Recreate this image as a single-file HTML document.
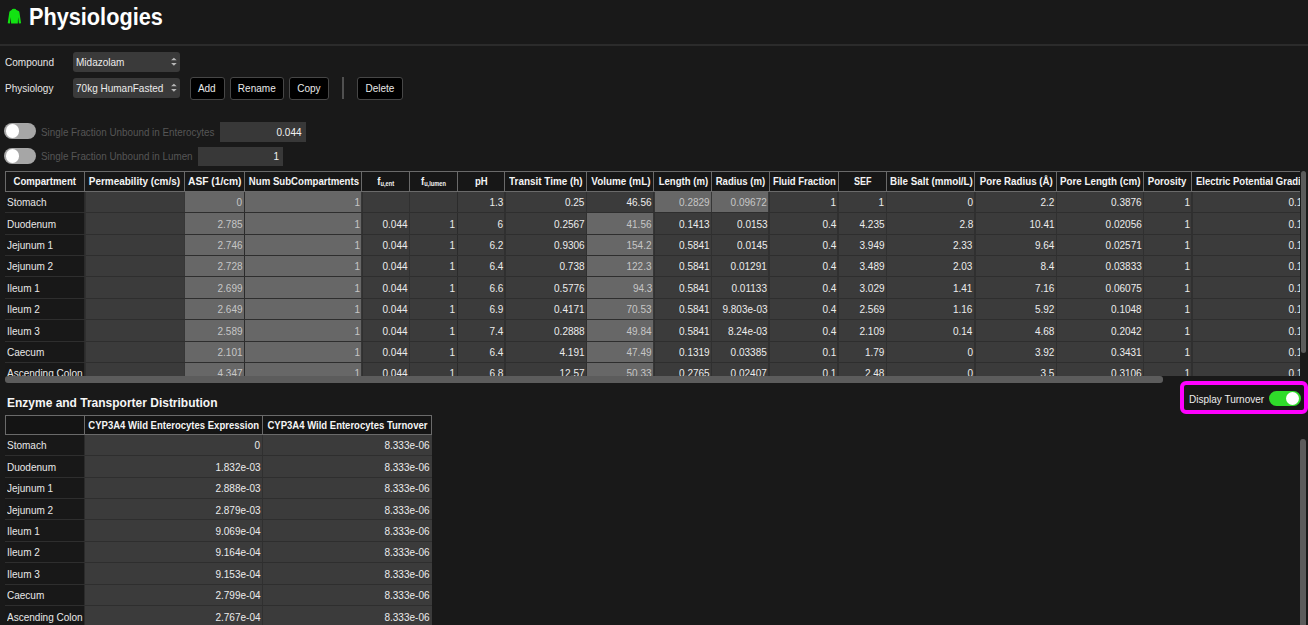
<!DOCTYPE html>
<html><head><meta charset="utf-8"><style>
html,body{margin:0;padding:0;width:1308px;height:625px;overflow:hidden;background:#191919;}
body{position:relative;font-family:"Liberation Sans",sans-serif;}
.r{position:absolute;}
.t{position:absolute;white-space:nowrap;overflow:visible;display:flex;align-items:center;}
.t span{display:block;flex:none;white-space:nowrap;}
.clip{position:absolute;overflow:hidden;}
sub{font-size:6.6px;vertical-align:-1.3px;line-height:0;}
</style></head><body>
<svg style="position:absolute;left:0;top:0" width="40" height="40" viewBox="0 0 40 40"><path fill="#12e212" d="M12.4 9.0 Q14 8.6 15.6 9.0 L16.4 10.0 L18.6 10.9 Q19.3 11.3 19.4 12.2 L21.1 23.2 L18.9 23.4 L18.1 17.3 L17.8 23.5 L11.1 23.5 L10.8 17.3 L9.9 23.4 L7.7 23.2 L9.3 12.2 Q9.4 11.3 10.1 10.9 L11.6 10.0 Z"/></svg>
<div class="t" style="left:29px;top:2.5px;width:200px;height:28px;line-height:28px;justify-content:flex-start;font-size:23px;font-weight:bold;color:#ffffff;"><span style="transform:scaleX(0.943);transform-origin:left center">Physiologies</span></div>
<div class="r" style="left:0px;top:44px;width:1308px;height:2px;background:#2b2b2b;"></div>
<div class="t" style="left:5px;top:52px;width:80px;height:20px;line-height:20px;justify-content:flex-start;font-size:11px;font-weight:normal;color:#e6e6e6;"><span style="transform:scaleX(0.91);transform-origin:left center">Compound</span></div>
<div class="t" style="left:5px;top:78px;width:80px;height:20px;line-height:20px;justify-content:flex-start;font-size:11px;font-weight:normal;color:#e6e6e6;"><span style="transform:scaleX(0.91);transform-origin:left center">Physiology</span></div>
<div class="r" style="left:73px;top:52px;width:107px;height:20px;background:#3a3a3a;border-radius:3px"></div>
<div class="t" style="left:76px;top:52px;width:95px;height:20px;line-height:20px;justify-content:flex-start;font-size:11px;font-weight:normal;color:#ececec;"><span style="transform:scaleX(0.91);transform-origin:left center">Midazolam</span></div>
<svg style="position:absolute;left:170px;top:57px" width="8" height="10" viewBox="0 0 8 10"><path fill="#b8b8b8" d="M1.1 3.2 L3.9 0.7 L6.7 3.2 Z M1.1 6.0 L3.9 8.7 L6.7 6.0 Z"/></svg>
<div class="r" style="left:73px;top:78px;width:107px;height:20px;background:#3a3a3a;border-radius:3px"></div>
<div class="t" style="left:76px;top:78px;width:95px;height:20px;line-height:20px;justify-content:flex-start;font-size:11px;font-weight:normal;color:#ececec;"><span style="transform:scaleX(0.91);transform-origin:left center">70kg HumanFasted</span></div>
<svg style="position:absolute;left:170px;top:83px" width="8" height="10" viewBox="0 0 8 10"><path fill="#b8b8b8" d="M1.1 3.2 L3.9 0.7 L6.7 3.2 Z M1.1 6.0 L3.9 8.7 L6.7 6.0 Z"/></svg>
<div class="r" style="left:190px;top:76.5px;width:34.5px;height:23px;box-sizing:border-box;background:#000;border:1px solid #474747;border-radius:3px"></div>
<div class="t" style="left:190px;top:76.5px;width:34.5px;height:23px;line-height:23px;justify-content:center;font-size:11px;font-weight:normal;color:#e8e8e8;"><span style="transform:scaleX(0.91);transform-origin:center center">Add</span></div>
<div class="r" style="left:229.5px;top:76.5px;width:54.5px;height:23px;box-sizing:border-box;background:#000;border:1px solid #474747;border-radius:3px"></div>
<div class="t" style="left:229.5px;top:76.5px;width:54.5px;height:23px;line-height:23px;justify-content:center;font-size:11px;font-weight:normal;color:#e8e8e8;"><span style="transform:scaleX(0.91);transform-origin:center center">Rename</span></div>
<div class="r" style="left:289px;top:76.5px;width:39.5px;height:23px;box-sizing:border-box;background:#000;border:1px solid #474747;border-radius:3px"></div>
<div class="t" style="left:289px;top:76.5px;width:39.5px;height:23px;line-height:23px;justify-content:center;font-size:11px;font-weight:normal;color:#e8e8e8;"><span style="transform:scaleX(0.91);transform-origin:center center">Copy</span></div>
<div class="r" style="left:356.5px;top:76.5px;width:46.0px;height:23px;box-sizing:border-box;background:#000;border:1px solid #474747;border-radius:3px"></div>
<div class="t" style="left:356.5px;top:76.5px;width:46.0px;height:23px;line-height:23px;justify-content:center;font-size:11px;font-weight:normal;color:#e8e8e8;"><span style="transform:scaleX(0.91);transform-origin:center center">Delete</span></div>
<div class="r" style="left:342px;top:77px;width:2px;height:22px;background:#505050;"></div>
<div class="r" style="left:4.3px;top:123px;width:31.7px;height:16.3px;background:#a6a6a6;border-radius:9px"></div>
<div class="r" style="left:5.6px;top:124.3px;width:13.7px;height:13.7px;background:#ffffff;border-radius:50%"></div>
<div class="t" style="left:41.3px;top:122.5px;width:190px;height:19.5px;line-height:19.5px;justify-content:flex-start;font-size:11px;font-weight:normal;color:#565656;"><span style="transform:scaleX(0.895);transform-origin:left center">Single Fraction Unbound in Enterocytes</span></div>
<div class="r" style="left:220px;top:122px;width:85.5px;height:19.5px;background:#383838;"></div>
<div class="t" style="left:220px;top:122.5px;width:81.5px;height:19.5px;line-height:19.5px;justify-content:flex-end;font-size:11px;font-weight:normal;color:#f2f2f2;"><span style="transform:scaleX(0.91);transform-origin:right center">0.044</span></div>
<div class="r" style="left:4.3px;top:148px;width:31.7px;height:16.3px;background:#a6a6a6;border-radius:9px"></div>
<div class="r" style="left:5.6px;top:149.3px;width:13.7px;height:13.7px;background:#ffffff;border-radius:50%"></div>
<div class="t" style="left:41.3px;top:147.0px;width:190px;height:19.5px;line-height:19.5px;justify-content:flex-start;font-size:11px;font-weight:normal;color:#565656;"><span style="transform:scaleX(0.895);transform-origin:left center">Single Fraction Unbound in Lumen</span></div>
<div class="r" style="left:198px;top:146.5px;width:85px;height:19.5px;background:#383838;"></div>
<div class="t" style="left:198px;top:147.0px;width:81px;height:19.5px;line-height:19.5px;justify-content:flex-end;font-size:11px;font-weight:normal;color:#f2f2f2;"><span style="transform:scaleX(0.91);transform-origin:right center">1</span></div>
<div class="clip" style="left:0;top:0;width:1300px;height:376px">
<div class="r" style="left:4.5px;top:171px;width:1420px;height:21px;background:#171717;"></div>
<div class="r" style="left:4.5px;top:171px;width:1420px;height:1px;background:#6a6a6a;"></div>
<div class="r" style="left:4.5px;top:191px;width:1420px;height:1px;background:#6a6a6a;"></div>
<div class="r" style="left:4.5px;top:171px;width:1px;height:21px;background:#6a6a6a;"></div>
<div class="r" style="left:84px;top:171px;width:1px;height:21px;background:#6a6a6a;"></div>
<div class="r" style="left:184px;top:171px;width:1px;height:21px;background:#6a6a6a;"></div>
<div class="r" style="left:244px;top:171px;width:1px;height:21px;background:#6a6a6a;"></div>
<div class="r" style="left:361px;top:171px;width:1px;height:21px;background:#6a6a6a;"></div>
<div class="r" style="left:409px;top:171px;width:1px;height:21px;background:#6a6a6a;"></div>
<div class="r" style="left:457px;top:171px;width:1px;height:21px;background:#6a6a6a;"></div>
<div class="r" style="left:504px;top:171px;width:1px;height:21px;background:#6a6a6a;"></div>
<div class="r" style="left:586px;top:171px;width:1px;height:21px;background:#6a6a6a;"></div>
<div class="r" style="left:653px;top:171px;width:1px;height:21px;background:#6a6a6a;"></div>
<div class="r" style="left:711px;top:171px;width:1px;height:21px;background:#6a6a6a;"></div>
<div class="r" style="left:769px;top:171px;width:1px;height:21px;background:#6a6a6a;"></div>
<div class="r" style="left:838px;top:171px;width:1px;height:21px;background:#6a6a6a;"></div>
<div class="r" style="left:886px;top:171px;width:1px;height:21px;background:#6a6a6a;"></div>
<div class="r" style="left:974px;top:171px;width:1px;height:21px;background:#6a6a6a;"></div>
<div class="r" style="left:1056px;top:171px;width:1px;height:21px;background:#6a6a6a;"></div>
<div class="r" style="left:1143px;top:171px;width:1px;height:21px;background:#6a6a6a;"></div>
<div class="r" style="left:1191px;top:171px;width:1px;height:21px;background:#6a6a6a;"></div>
<div class="t" style="left:5px;top:171px;width:80px;height:21px;line-height:21px;justify-content:center;font-size:11px;font-weight:bold;color:#f4f4f4;"><span style="transform:scaleX(0.8745149999999999);transform-origin:center center">Compartment</span></div>
<div class="t" style="left:85px;top:171px;width:99.30000000000001px;height:21px;line-height:21px;justify-content:center;font-size:11px;font-weight:bold;color:#f4f4f4;"><span style="transform:scaleX(0.90479);transform-origin:center center">Permeability (cm/s)</span></div>
<div class="t" style="left:185.0px;top:171px;width:60.19999999999999px;height:21px;line-height:21px;justify-content:center;font-size:11px;font-weight:bold;color:#f4f4f4;"><span style="transform:scaleX(0.93074);transform-origin:center center">ASF (1/cm)</span></div>
<div class="t" style="left:245.6px;top:171px;width:117.5px;height:21px;line-height:21px;justify-content:center;font-size:11px;font-weight:bold;color:#f4f4f4;"><span style="transform:scaleX(0.87538);transform-origin:center center">Num SubCompartments</span></div>
<div class="t" style="left:362px;top:171px;width:47.69999999999999px;height:21px;line-height:21px;justify-content:center;font-size:11px;font-weight:bold;color:#f4f4f4;"><span style="transform:scaleX(0.865);transform-origin:center center">f<sub>u,ent</sub></span></div>
<div class="t" style="left:409.7px;top:171px;width:47.80000000000001px;height:21px;line-height:21px;justify-content:center;font-size:11px;font-weight:bold;color:#f4f4f4;"><span style="transform:scaleX(0.865);transform-origin:center center">f<sub>u,lumen</sub></span></div>
<div class="t" style="left:457.5px;top:171px;width:47.30000000000001px;height:21px;line-height:21px;justify-content:center;font-size:11px;font-weight:bold;color:#f4f4f4;"><span style="transform:scaleX(0.865);transform-origin:center center">pH</span></div>
<div class="t" style="left:504.8px;top:171px;width:81.90000000000003px;height:21px;line-height:21px;justify-content:center;font-size:11px;font-weight:bold;color:#f4f4f4;"><span style="transform:scaleX(0.8996000000000001);transform-origin:center center">Transit Time (h)</span></div>
<div class="t" style="left:587.5px;top:171px;width:67.29999999999995px;height:21px;line-height:21px;justify-content:center;font-size:11px;font-weight:bold;color:#f4f4f4;"><span style="transform:scaleX(0.900465);transform-origin:center center">Volume (mL)</span></div>
<div class="t" style="left:654.5px;top:171px;width:57.700000000000045px;height:21px;line-height:21px;justify-content:center;font-size:11px;font-weight:bold;color:#f4f4f4;"><span style="transform:scaleX(0.87019);transform-origin:center center">Length (m)</span></div>
<div class="t" style="left:712.1px;top:171px;width:57.5px;height:21px;line-height:21px;justify-content:center;font-size:11px;font-weight:bold;color:#f4f4f4;"><span style="transform:scaleX(0.87019);transform-origin:center center">Radius (m)</span></div>
<div class="t" style="left:770.1px;top:171px;width:69.0px;height:21px;line-height:21px;justify-content:center;font-size:11px;font-weight:bold;color:#f4f4f4;"><span style="transform:scaleX(0.865);transform-origin:center center">Fluid Fraction</span></div>
<div class="t" style="left:838.2px;top:171px;width:48.09999999999991px;height:21px;line-height:21px;justify-content:center;font-size:11px;font-weight:bold;color:#f4f4f4;"><span style="transform:scaleX(0.82175);transform-origin:center center">SEF</span></div>
<div class="t" style="left:887.0999999999999px;top:171px;width:88.5px;height:21px;line-height:21px;justify-content:center;font-size:11px;font-weight:bold;color:#f4f4f4;"><span style="transform:scaleX(0.89095);transform-origin:center center">Bile Salt (mmol/L)</span></div>
<div class="t" style="left:975.5999999999999px;top:171px;width:81.5px;height:21px;line-height:21px;justify-content:center;font-size:11px;font-weight:bold;color:#f4f4f4;"><span style="transform:scaleX(0.8848949999999999);transform-origin:center center">Pore Radius (&#197;)</span></div>
<div class="t" style="left:1056.3px;top:171px;width:87.29999999999995px;height:21px;line-height:21px;justify-content:center;font-size:11px;font-weight:bold;color:#f4f4f4;"><span style="transform:scaleX(0.89095);transform-origin:center center">Pore Length (cm)</span></div>
<div class="t" style="left:1142.8px;top:171px;width:48.200000000000045px;height:21px;line-height:21px;justify-content:center;font-size:11px;font-weight:bold;color:#f4f4f4;"><span style="transform:scaleX(0.8745149999999999);transform-origin:center center">Porosity</span></div>
<div class="t" style="left:1196px;top:171px;width:200px;height:21px;line-height:21px;justify-content:flex-start;font-size:11px;font-weight:bold;color:#f4f4f4;"><span style="transform:scaleX(0.865);transform-origin:left center">Electric Potential Gradient</span></div>
<div class="r" style="left:4.5px;top:192.0px;width:80px;height:21.4px;background:#181818;"></div>
<div class="t" style="left:7px;top:192.2px;width:78px;height:20.4px;line-height:20.4px;justify-content:flex-start;font-size:11px;font-weight:normal;color:#e8e8e8;"><span style="transform:scaleX(0.91);transform-origin:left center">Stomach</span></div>
<div class="r" style="left:85px;top:192.0px;width:99.30000000000001px;height:21.4px;background:#3b3b3b;"></div>
<div class="t" style="left:85px;top:192.2px;width:97.30000000000001px;height:20.4px;line-height:20.4px;justify-content:flex-end;font-size:11px;font-weight:normal;color:#ececec;"><span style="transform:scaleX(0.91);transform-origin:right center"></span></div>
<div class="r" style="left:184.3px;top:192.0px;width:60.19999999999999px;height:21.4px;background:#676767;"></div>
<div class="t" style="left:184.3px;top:192.2px;width:58.19999999999999px;height:20.4px;line-height:20.4px;justify-content:flex-end;font-size:11px;font-weight:normal;color:#c6c6c6;"><span style="transform:scaleX(0.91);transform-origin:right center">0</span></div>
<div class="r" style="left:244.5px;top:192.0px;width:117.5px;height:21.4px;background:#676767;"></div>
<div class="t" style="left:244.5px;top:192.2px;width:115.5px;height:20.4px;line-height:20.4px;justify-content:flex-end;font-size:11px;font-weight:normal;color:#c6c6c6;"><span style="transform:scaleX(0.91);transform-origin:right center">1</span></div>
<div class="r" style="left:362px;top:192.0px;width:47.69999999999999px;height:21.4px;background:#3b3b3b;"></div>
<div class="t" style="left:362px;top:192.2px;width:45.69999999999999px;height:20.4px;line-height:20.4px;justify-content:flex-end;font-size:11px;font-weight:normal;color:#ececec;"><span style="transform:scaleX(0.91);transform-origin:right center"></span></div>
<div class="r" style="left:409.7px;top:192.0px;width:47.80000000000001px;height:21.4px;background:#3b3b3b;"></div>
<div class="t" style="left:409.7px;top:192.2px;width:45.80000000000001px;height:20.4px;line-height:20.4px;justify-content:flex-end;font-size:11px;font-weight:normal;color:#ececec;"><span style="transform:scaleX(0.91);transform-origin:right center"></span></div>
<div class="r" style="left:457.5px;top:192.0px;width:47.30000000000001px;height:21.4px;background:#3b3b3b;"></div>
<div class="t" style="left:457.5px;top:192.2px;width:45.30000000000001px;height:20.4px;line-height:20.4px;justify-content:flex-end;font-size:11px;font-weight:normal;color:#ececec;"><span style="transform:scaleX(0.91);transform-origin:right center">1.3</span></div>
<div class="r" style="left:504.8px;top:192.0px;width:81.90000000000003px;height:21.4px;background:#3b3b3b;"></div>
<div class="t" style="left:504.8px;top:192.2px;width:79.90000000000003px;height:20.4px;line-height:20.4px;justify-content:flex-end;font-size:11px;font-weight:normal;color:#ececec;"><span style="transform:scaleX(0.91);transform-origin:right center">0.25</span></div>
<div class="r" style="left:586.7px;top:192.0px;width:67.29999999999995px;height:21.4px;background:#3b3b3b;"></div>
<div class="t" style="left:586.7px;top:192.2px;width:65.29999999999995px;height:20.4px;line-height:20.4px;justify-content:flex-end;font-size:11px;font-weight:normal;color:#ececec;"><span style="transform:scaleX(0.91);transform-origin:right center">46.56</span></div>
<div class="r" style="left:654px;top:192.0px;width:57.700000000000045px;height:21.4px;background:#676767;"></div>
<div class="t" style="left:654px;top:192.2px;width:55.700000000000045px;height:20.4px;line-height:20.4px;justify-content:flex-end;font-size:11px;font-weight:normal;color:#c6c6c6;"><span style="transform:scaleX(0.91);transform-origin:right center">0.2829</span></div>
<div class="r" style="left:711.7px;top:192.0px;width:57.5px;height:21.4px;background:#676767;"></div>
<div class="t" style="left:711.7px;top:192.2px;width:55.5px;height:20.4px;line-height:20.4px;justify-content:flex-end;font-size:11px;font-weight:normal;color:#c6c6c6;"><span style="transform:scaleX(0.91);transform-origin:right center">0.09672</span></div>
<div class="r" style="left:769.2px;top:192.0px;width:69.0px;height:21.4px;background:#3b3b3b;"></div>
<div class="t" style="left:769.2px;top:192.2px;width:67.0px;height:20.4px;line-height:20.4px;justify-content:flex-end;font-size:11px;font-weight:normal;color:#ececec;"><span style="transform:scaleX(0.91);transform-origin:right center">1</span></div>
<div class="r" style="left:838.2px;top:192.0px;width:48.09999999999991px;height:21.4px;background:#3b3b3b;"></div>
<div class="t" style="left:838.2px;top:192.2px;width:46.09999999999991px;height:20.4px;line-height:20.4px;justify-content:flex-end;font-size:11px;font-weight:normal;color:#ececec;"><span style="transform:scaleX(0.91);transform-origin:right center">1</span></div>
<div class="r" style="left:886.3px;top:192.0px;width:88.5px;height:21.4px;background:#3b3b3b;"></div>
<div class="t" style="left:886.3px;top:192.2px;width:86.5px;height:20.4px;line-height:20.4px;justify-content:flex-end;font-size:11px;font-weight:normal;color:#ececec;"><span style="transform:scaleX(0.91);transform-origin:right center">0</span></div>
<div class="r" style="left:974.8px;top:192.0px;width:81.5px;height:21.4px;background:#3b3b3b;"></div>
<div class="t" style="left:974.8px;top:192.2px;width:79.5px;height:20.4px;line-height:20.4px;justify-content:flex-end;font-size:11px;font-weight:normal;color:#ececec;"><span style="transform:scaleX(0.91);transform-origin:right center">2.2</span></div>
<div class="r" style="left:1056.3px;top:192.0px;width:87.29999999999995px;height:21.4px;background:#3b3b3b;"></div>
<div class="t" style="left:1056.3px;top:192.2px;width:85.29999999999995px;height:20.4px;line-height:20.4px;justify-content:flex-end;font-size:11px;font-weight:normal;color:#ececec;"><span style="transform:scaleX(0.91);transform-origin:right center">0.3876</span></div>
<div class="r" style="left:1143.6px;top:192.0px;width:48.200000000000045px;height:21.4px;background:#3b3b3b;"></div>
<div class="t" style="left:1143.6px;top:192.2px;width:46.200000000000045px;height:20.4px;line-height:20.4px;justify-content:flex-end;font-size:11px;font-weight:normal;color:#ececec;"><span style="transform:scaleX(0.91);transform-origin:right center">1</span></div>
<div class="r" style="left:1191.8px;top:192.0px;width:112.70000000000005px;height:21.4px;background:#3b3b3b;"></div>
<div class="t" style="left:1191.8px;top:192.2px;width:110.70000000000005px;height:20.4px;line-height:20.4px;justify-content:flex-end;font-size:11px;font-weight:normal;color:#ececec;"><span style="transform:scaleX(0.91);transform-origin:right center">0.1</span></div>
<div class="r" style="left:4.5px;top:212px;width:1420px;height:1px;background:#2e2e2e;"></div>
<div class="r" style="left:4.5px;top:213.4px;width:80px;height:21.4px;background:#181818;"></div>
<div class="t" style="left:7px;top:213.6px;width:78px;height:20.4px;line-height:20.4px;justify-content:flex-start;font-size:11px;font-weight:normal;color:#e8e8e8;"><span style="transform:scaleX(0.91);transform-origin:left center">Duodenum</span></div>
<div class="r" style="left:85px;top:213.4px;width:99.30000000000001px;height:21.4px;background:#3b3b3b;"></div>
<div class="t" style="left:85px;top:213.6px;width:97.30000000000001px;height:20.4px;line-height:20.4px;justify-content:flex-end;font-size:11px;font-weight:normal;color:#ececec;"><span style="transform:scaleX(0.91);transform-origin:right center"></span></div>
<div class="r" style="left:184.3px;top:213.4px;width:60.19999999999999px;height:21.4px;background:#676767;"></div>
<div class="t" style="left:184.3px;top:213.6px;width:58.19999999999999px;height:20.4px;line-height:20.4px;justify-content:flex-end;font-size:11px;font-weight:normal;color:#c6c6c6;"><span style="transform:scaleX(0.91);transform-origin:right center">2.785</span></div>
<div class="r" style="left:244.5px;top:213.4px;width:117.5px;height:21.4px;background:#676767;"></div>
<div class="t" style="left:244.5px;top:213.6px;width:115.5px;height:20.4px;line-height:20.4px;justify-content:flex-end;font-size:11px;font-weight:normal;color:#c6c6c6;"><span style="transform:scaleX(0.91);transform-origin:right center">1</span></div>
<div class="r" style="left:362px;top:213.4px;width:47.69999999999999px;height:21.4px;background:#3b3b3b;"></div>
<div class="t" style="left:362px;top:213.6px;width:45.69999999999999px;height:20.4px;line-height:20.4px;justify-content:flex-end;font-size:11px;font-weight:normal;color:#ececec;"><span style="transform:scaleX(0.91);transform-origin:right center">0.044</span></div>
<div class="r" style="left:409.7px;top:213.4px;width:47.80000000000001px;height:21.4px;background:#3b3b3b;"></div>
<div class="t" style="left:409.7px;top:213.6px;width:45.80000000000001px;height:20.4px;line-height:20.4px;justify-content:flex-end;font-size:11px;font-weight:normal;color:#ececec;"><span style="transform:scaleX(0.91);transform-origin:right center">1</span></div>
<div class="r" style="left:457.5px;top:213.4px;width:47.30000000000001px;height:21.4px;background:#3b3b3b;"></div>
<div class="t" style="left:457.5px;top:213.6px;width:45.30000000000001px;height:20.4px;line-height:20.4px;justify-content:flex-end;font-size:11px;font-weight:normal;color:#ececec;"><span style="transform:scaleX(0.91);transform-origin:right center">6</span></div>
<div class="r" style="left:504.8px;top:213.4px;width:81.90000000000003px;height:21.4px;background:#3b3b3b;"></div>
<div class="t" style="left:504.8px;top:213.6px;width:79.90000000000003px;height:20.4px;line-height:20.4px;justify-content:flex-end;font-size:11px;font-weight:normal;color:#ececec;"><span style="transform:scaleX(0.91);transform-origin:right center">0.2567</span></div>
<div class="r" style="left:586.7px;top:213.4px;width:67.29999999999995px;height:21.4px;background:#676767;"></div>
<div class="t" style="left:586.7px;top:213.6px;width:65.29999999999995px;height:20.4px;line-height:20.4px;justify-content:flex-end;font-size:11px;font-weight:normal;color:#c6c6c6;"><span style="transform:scaleX(0.91);transform-origin:right center">41.56</span></div>
<div class="r" style="left:654px;top:213.4px;width:57.700000000000045px;height:21.4px;background:#3b3b3b;"></div>
<div class="t" style="left:654px;top:213.6px;width:55.700000000000045px;height:20.4px;line-height:20.4px;justify-content:flex-end;font-size:11px;font-weight:normal;color:#ececec;"><span style="transform:scaleX(0.91);transform-origin:right center">0.1413</span></div>
<div class="r" style="left:711.7px;top:213.4px;width:57.5px;height:21.4px;background:#3b3b3b;"></div>
<div class="t" style="left:711.7px;top:213.6px;width:55.5px;height:20.4px;line-height:20.4px;justify-content:flex-end;font-size:11px;font-weight:normal;color:#ececec;"><span style="transform:scaleX(0.91);transform-origin:right center">0.0153</span></div>
<div class="r" style="left:769.2px;top:213.4px;width:69.0px;height:21.4px;background:#3b3b3b;"></div>
<div class="t" style="left:769.2px;top:213.6px;width:67.0px;height:20.4px;line-height:20.4px;justify-content:flex-end;font-size:11px;font-weight:normal;color:#ececec;"><span style="transform:scaleX(0.91);transform-origin:right center">0.4</span></div>
<div class="r" style="left:838.2px;top:213.4px;width:48.09999999999991px;height:21.4px;background:#3b3b3b;"></div>
<div class="t" style="left:838.2px;top:213.6px;width:46.09999999999991px;height:20.4px;line-height:20.4px;justify-content:flex-end;font-size:11px;font-weight:normal;color:#ececec;"><span style="transform:scaleX(0.91);transform-origin:right center">4.235</span></div>
<div class="r" style="left:886.3px;top:213.4px;width:88.5px;height:21.4px;background:#3b3b3b;"></div>
<div class="t" style="left:886.3px;top:213.6px;width:86.5px;height:20.4px;line-height:20.4px;justify-content:flex-end;font-size:11px;font-weight:normal;color:#ececec;"><span style="transform:scaleX(0.91);transform-origin:right center">2.8</span></div>
<div class="r" style="left:974.8px;top:213.4px;width:81.5px;height:21.4px;background:#3b3b3b;"></div>
<div class="t" style="left:974.8px;top:213.6px;width:79.5px;height:20.4px;line-height:20.4px;justify-content:flex-end;font-size:11px;font-weight:normal;color:#ececec;"><span style="transform:scaleX(0.91);transform-origin:right center">10.41</span></div>
<div class="r" style="left:1056.3px;top:213.4px;width:87.29999999999995px;height:21.4px;background:#3b3b3b;"></div>
<div class="t" style="left:1056.3px;top:213.6px;width:85.29999999999995px;height:20.4px;line-height:20.4px;justify-content:flex-end;font-size:11px;font-weight:normal;color:#ececec;"><span style="transform:scaleX(0.91);transform-origin:right center">0.02056</span></div>
<div class="r" style="left:1143.6px;top:213.4px;width:48.200000000000045px;height:21.4px;background:#3b3b3b;"></div>
<div class="t" style="left:1143.6px;top:213.6px;width:46.200000000000045px;height:20.4px;line-height:20.4px;justify-content:flex-end;font-size:11px;font-weight:normal;color:#ececec;"><span style="transform:scaleX(0.91);transform-origin:right center">1</span></div>
<div class="r" style="left:1191.8px;top:213.4px;width:112.70000000000005px;height:21.4px;background:#3b3b3b;"></div>
<div class="t" style="left:1191.8px;top:213.6px;width:110.70000000000005px;height:20.4px;line-height:20.4px;justify-content:flex-end;font-size:11px;font-weight:normal;color:#ececec;"><span style="transform:scaleX(0.91);transform-origin:right center">0.1</span></div>
<div class="r" style="left:4.5px;top:234px;width:1420px;height:1px;background:#2e2e2e;"></div>
<div class="r" style="left:4.5px;top:234.8px;width:80px;height:21.4px;background:#181818;"></div>
<div class="t" style="left:7px;top:235.0px;width:78px;height:20.4px;line-height:20.4px;justify-content:flex-start;font-size:11px;font-weight:normal;color:#e8e8e8;"><span style="transform:scaleX(0.91);transform-origin:left center">Jejunum 1</span></div>
<div class="r" style="left:85px;top:234.8px;width:99.30000000000001px;height:21.4px;background:#3b3b3b;"></div>
<div class="t" style="left:85px;top:235.0px;width:97.30000000000001px;height:20.4px;line-height:20.4px;justify-content:flex-end;font-size:11px;font-weight:normal;color:#ececec;"><span style="transform:scaleX(0.91);transform-origin:right center"></span></div>
<div class="r" style="left:184.3px;top:234.8px;width:60.19999999999999px;height:21.4px;background:#676767;"></div>
<div class="t" style="left:184.3px;top:235.0px;width:58.19999999999999px;height:20.4px;line-height:20.4px;justify-content:flex-end;font-size:11px;font-weight:normal;color:#c6c6c6;"><span style="transform:scaleX(0.91);transform-origin:right center">2.746</span></div>
<div class="r" style="left:244.5px;top:234.8px;width:117.5px;height:21.4px;background:#676767;"></div>
<div class="t" style="left:244.5px;top:235.0px;width:115.5px;height:20.4px;line-height:20.4px;justify-content:flex-end;font-size:11px;font-weight:normal;color:#c6c6c6;"><span style="transform:scaleX(0.91);transform-origin:right center">1</span></div>
<div class="r" style="left:362px;top:234.8px;width:47.69999999999999px;height:21.4px;background:#3b3b3b;"></div>
<div class="t" style="left:362px;top:235.0px;width:45.69999999999999px;height:20.4px;line-height:20.4px;justify-content:flex-end;font-size:11px;font-weight:normal;color:#ececec;"><span style="transform:scaleX(0.91);transform-origin:right center">0.044</span></div>
<div class="r" style="left:409.7px;top:234.8px;width:47.80000000000001px;height:21.4px;background:#3b3b3b;"></div>
<div class="t" style="left:409.7px;top:235.0px;width:45.80000000000001px;height:20.4px;line-height:20.4px;justify-content:flex-end;font-size:11px;font-weight:normal;color:#ececec;"><span style="transform:scaleX(0.91);transform-origin:right center">1</span></div>
<div class="r" style="left:457.5px;top:234.8px;width:47.30000000000001px;height:21.4px;background:#3b3b3b;"></div>
<div class="t" style="left:457.5px;top:235.0px;width:45.30000000000001px;height:20.4px;line-height:20.4px;justify-content:flex-end;font-size:11px;font-weight:normal;color:#ececec;"><span style="transform:scaleX(0.91);transform-origin:right center">6.2</span></div>
<div class="r" style="left:504.8px;top:234.8px;width:81.90000000000003px;height:21.4px;background:#3b3b3b;"></div>
<div class="t" style="left:504.8px;top:235.0px;width:79.90000000000003px;height:20.4px;line-height:20.4px;justify-content:flex-end;font-size:11px;font-weight:normal;color:#ececec;"><span style="transform:scaleX(0.91);transform-origin:right center">0.9306</span></div>
<div class="r" style="left:586.7px;top:234.8px;width:67.29999999999995px;height:21.4px;background:#676767;"></div>
<div class="t" style="left:586.7px;top:235.0px;width:65.29999999999995px;height:20.4px;line-height:20.4px;justify-content:flex-end;font-size:11px;font-weight:normal;color:#c6c6c6;"><span style="transform:scaleX(0.91);transform-origin:right center">154.2</span></div>
<div class="r" style="left:654px;top:234.8px;width:57.700000000000045px;height:21.4px;background:#3b3b3b;"></div>
<div class="t" style="left:654px;top:235.0px;width:55.700000000000045px;height:20.4px;line-height:20.4px;justify-content:flex-end;font-size:11px;font-weight:normal;color:#ececec;"><span style="transform:scaleX(0.91);transform-origin:right center">0.5841</span></div>
<div class="r" style="left:711.7px;top:234.8px;width:57.5px;height:21.4px;background:#3b3b3b;"></div>
<div class="t" style="left:711.7px;top:235.0px;width:55.5px;height:20.4px;line-height:20.4px;justify-content:flex-end;font-size:11px;font-weight:normal;color:#ececec;"><span style="transform:scaleX(0.91);transform-origin:right center">0.0145</span></div>
<div class="r" style="left:769.2px;top:234.8px;width:69.0px;height:21.4px;background:#3b3b3b;"></div>
<div class="t" style="left:769.2px;top:235.0px;width:67.0px;height:20.4px;line-height:20.4px;justify-content:flex-end;font-size:11px;font-weight:normal;color:#ececec;"><span style="transform:scaleX(0.91);transform-origin:right center">0.4</span></div>
<div class="r" style="left:838.2px;top:234.8px;width:48.09999999999991px;height:21.4px;background:#3b3b3b;"></div>
<div class="t" style="left:838.2px;top:235.0px;width:46.09999999999991px;height:20.4px;line-height:20.4px;justify-content:flex-end;font-size:11px;font-weight:normal;color:#ececec;"><span style="transform:scaleX(0.91);transform-origin:right center">3.949</span></div>
<div class="r" style="left:886.3px;top:234.8px;width:88.5px;height:21.4px;background:#3b3b3b;"></div>
<div class="t" style="left:886.3px;top:235.0px;width:86.5px;height:20.4px;line-height:20.4px;justify-content:flex-end;font-size:11px;font-weight:normal;color:#ececec;"><span style="transform:scaleX(0.91);transform-origin:right center">2.33</span></div>
<div class="r" style="left:974.8px;top:234.8px;width:81.5px;height:21.4px;background:#3b3b3b;"></div>
<div class="t" style="left:974.8px;top:235.0px;width:79.5px;height:20.4px;line-height:20.4px;justify-content:flex-end;font-size:11px;font-weight:normal;color:#ececec;"><span style="transform:scaleX(0.91);transform-origin:right center">9.64</span></div>
<div class="r" style="left:1056.3px;top:234.8px;width:87.29999999999995px;height:21.4px;background:#3b3b3b;"></div>
<div class="t" style="left:1056.3px;top:235.0px;width:85.29999999999995px;height:20.4px;line-height:20.4px;justify-content:flex-end;font-size:11px;font-weight:normal;color:#ececec;"><span style="transform:scaleX(0.91);transform-origin:right center">0.02571</span></div>
<div class="r" style="left:1143.6px;top:234.8px;width:48.200000000000045px;height:21.4px;background:#3b3b3b;"></div>
<div class="t" style="left:1143.6px;top:235.0px;width:46.200000000000045px;height:20.4px;line-height:20.4px;justify-content:flex-end;font-size:11px;font-weight:normal;color:#ececec;"><span style="transform:scaleX(0.91);transform-origin:right center">1</span></div>
<div class="r" style="left:1191.8px;top:234.8px;width:112.70000000000005px;height:21.4px;background:#3b3b3b;"></div>
<div class="t" style="left:1191.8px;top:235.0px;width:110.70000000000005px;height:20.4px;line-height:20.4px;justify-content:flex-end;font-size:11px;font-weight:normal;color:#ececec;"><span style="transform:scaleX(0.91);transform-origin:right center">0.1</span></div>
<div class="r" style="left:4.5px;top:255px;width:1420px;height:1px;background:#2e2e2e;"></div>
<div class="r" style="left:4.5px;top:256.2px;width:80px;height:21.4px;background:#181818;"></div>
<div class="t" style="left:7px;top:256.4px;width:78px;height:20.4px;line-height:20.4px;justify-content:flex-start;font-size:11px;font-weight:normal;color:#e8e8e8;"><span style="transform:scaleX(0.91);transform-origin:left center">Jejunum 2</span></div>
<div class="r" style="left:85px;top:256.2px;width:99.30000000000001px;height:21.4px;background:#3b3b3b;"></div>
<div class="t" style="left:85px;top:256.4px;width:97.30000000000001px;height:20.4px;line-height:20.4px;justify-content:flex-end;font-size:11px;font-weight:normal;color:#ececec;"><span style="transform:scaleX(0.91);transform-origin:right center"></span></div>
<div class="r" style="left:184.3px;top:256.2px;width:60.19999999999999px;height:21.4px;background:#676767;"></div>
<div class="t" style="left:184.3px;top:256.4px;width:58.19999999999999px;height:20.4px;line-height:20.4px;justify-content:flex-end;font-size:11px;font-weight:normal;color:#c6c6c6;"><span style="transform:scaleX(0.91);transform-origin:right center">2.728</span></div>
<div class="r" style="left:244.5px;top:256.2px;width:117.5px;height:21.4px;background:#676767;"></div>
<div class="t" style="left:244.5px;top:256.4px;width:115.5px;height:20.4px;line-height:20.4px;justify-content:flex-end;font-size:11px;font-weight:normal;color:#c6c6c6;"><span style="transform:scaleX(0.91);transform-origin:right center">1</span></div>
<div class="r" style="left:362px;top:256.2px;width:47.69999999999999px;height:21.4px;background:#3b3b3b;"></div>
<div class="t" style="left:362px;top:256.4px;width:45.69999999999999px;height:20.4px;line-height:20.4px;justify-content:flex-end;font-size:11px;font-weight:normal;color:#ececec;"><span style="transform:scaleX(0.91);transform-origin:right center">0.044</span></div>
<div class="r" style="left:409.7px;top:256.2px;width:47.80000000000001px;height:21.4px;background:#3b3b3b;"></div>
<div class="t" style="left:409.7px;top:256.4px;width:45.80000000000001px;height:20.4px;line-height:20.4px;justify-content:flex-end;font-size:11px;font-weight:normal;color:#ececec;"><span style="transform:scaleX(0.91);transform-origin:right center">1</span></div>
<div class="r" style="left:457.5px;top:256.2px;width:47.30000000000001px;height:21.4px;background:#3b3b3b;"></div>
<div class="t" style="left:457.5px;top:256.4px;width:45.30000000000001px;height:20.4px;line-height:20.4px;justify-content:flex-end;font-size:11px;font-weight:normal;color:#ececec;"><span style="transform:scaleX(0.91);transform-origin:right center">6.4</span></div>
<div class="r" style="left:504.8px;top:256.2px;width:81.90000000000003px;height:21.4px;background:#3b3b3b;"></div>
<div class="t" style="left:504.8px;top:256.4px;width:79.90000000000003px;height:20.4px;line-height:20.4px;justify-content:flex-end;font-size:11px;font-weight:normal;color:#ececec;"><span style="transform:scaleX(0.91);transform-origin:right center">0.738</span></div>
<div class="r" style="left:586.7px;top:256.2px;width:67.29999999999995px;height:21.4px;background:#676767;"></div>
<div class="t" style="left:586.7px;top:256.4px;width:65.29999999999995px;height:20.4px;line-height:20.4px;justify-content:flex-end;font-size:11px;font-weight:normal;color:#c6c6c6;"><span style="transform:scaleX(0.91);transform-origin:right center">122.3</span></div>
<div class="r" style="left:654px;top:256.2px;width:57.700000000000045px;height:21.4px;background:#3b3b3b;"></div>
<div class="t" style="left:654px;top:256.4px;width:55.700000000000045px;height:20.4px;line-height:20.4px;justify-content:flex-end;font-size:11px;font-weight:normal;color:#ececec;"><span style="transform:scaleX(0.91);transform-origin:right center">0.5841</span></div>
<div class="r" style="left:711.7px;top:256.2px;width:57.5px;height:21.4px;background:#3b3b3b;"></div>
<div class="t" style="left:711.7px;top:256.4px;width:55.5px;height:20.4px;line-height:20.4px;justify-content:flex-end;font-size:11px;font-weight:normal;color:#ececec;"><span style="transform:scaleX(0.91);transform-origin:right center">0.01291</span></div>
<div class="r" style="left:769.2px;top:256.2px;width:69.0px;height:21.4px;background:#3b3b3b;"></div>
<div class="t" style="left:769.2px;top:256.4px;width:67.0px;height:20.4px;line-height:20.4px;justify-content:flex-end;font-size:11px;font-weight:normal;color:#ececec;"><span style="transform:scaleX(0.91);transform-origin:right center">0.4</span></div>
<div class="r" style="left:838.2px;top:256.2px;width:48.09999999999991px;height:21.4px;background:#3b3b3b;"></div>
<div class="t" style="left:838.2px;top:256.4px;width:46.09999999999991px;height:20.4px;line-height:20.4px;justify-content:flex-end;font-size:11px;font-weight:normal;color:#ececec;"><span style="transform:scaleX(0.91);transform-origin:right center">3.489</span></div>
<div class="r" style="left:886.3px;top:256.2px;width:88.5px;height:21.4px;background:#3b3b3b;"></div>
<div class="t" style="left:886.3px;top:256.4px;width:86.5px;height:20.4px;line-height:20.4px;justify-content:flex-end;font-size:11px;font-weight:normal;color:#ececec;"><span style="transform:scaleX(0.91);transform-origin:right center">2.03</span></div>
<div class="r" style="left:974.8px;top:256.2px;width:81.5px;height:21.4px;background:#3b3b3b;"></div>
<div class="t" style="left:974.8px;top:256.4px;width:79.5px;height:20.4px;line-height:20.4px;justify-content:flex-end;font-size:11px;font-weight:normal;color:#ececec;"><span style="transform:scaleX(0.91);transform-origin:right center">8.4</span></div>
<div class="r" style="left:1056.3px;top:256.2px;width:87.29999999999995px;height:21.4px;background:#3b3b3b;"></div>
<div class="t" style="left:1056.3px;top:256.4px;width:85.29999999999995px;height:20.4px;line-height:20.4px;justify-content:flex-end;font-size:11px;font-weight:normal;color:#ececec;"><span style="transform:scaleX(0.91);transform-origin:right center">0.03833</span></div>
<div class="r" style="left:1143.6px;top:256.2px;width:48.200000000000045px;height:21.4px;background:#3b3b3b;"></div>
<div class="t" style="left:1143.6px;top:256.4px;width:46.200000000000045px;height:20.4px;line-height:20.4px;justify-content:flex-end;font-size:11px;font-weight:normal;color:#ececec;"><span style="transform:scaleX(0.91);transform-origin:right center">1</span></div>
<div class="r" style="left:1191.8px;top:256.2px;width:112.70000000000005px;height:21.4px;background:#3b3b3b;"></div>
<div class="t" style="left:1191.8px;top:256.4px;width:110.70000000000005px;height:20.4px;line-height:20.4px;justify-content:flex-end;font-size:11px;font-weight:normal;color:#ececec;"><span style="transform:scaleX(0.91);transform-origin:right center">0.1</span></div>
<div class="r" style="left:4.5px;top:276px;width:1420px;height:1px;background:#2e2e2e;"></div>
<div class="r" style="left:4.5px;top:277.6px;width:80px;height:21.4px;background:#181818;"></div>
<div class="t" style="left:7px;top:277.8px;width:78px;height:20.4px;line-height:20.4px;justify-content:flex-start;font-size:11px;font-weight:normal;color:#e8e8e8;"><span style="transform:scaleX(0.91);transform-origin:left center">Ileum 1</span></div>
<div class="r" style="left:85px;top:277.6px;width:99.30000000000001px;height:21.4px;background:#3b3b3b;"></div>
<div class="t" style="left:85px;top:277.8px;width:97.30000000000001px;height:20.4px;line-height:20.4px;justify-content:flex-end;font-size:11px;font-weight:normal;color:#ececec;"><span style="transform:scaleX(0.91);transform-origin:right center"></span></div>
<div class="r" style="left:184.3px;top:277.6px;width:60.19999999999999px;height:21.4px;background:#676767;"></div>
<div class="t" style="left:184.3px;top:277.8px;width:58.19999999999999px;height:20.4px;line-height:20.4px;justify-content:flex-end;font-size:11px;font-weight:normal;color:#c6c6c6;"><span style="transform:scaleX(0.91);transform-origin:right center">2.699</span></div>
<div class="r" style="left:244.5px;top:277.6px;width:117.5px;height:21.4px;background:#676767;"></div>
<div class="t" style="left:244.5px;top:277.8px;width:115.5px;height:20.4px;line-height:20.4px;justify-content:flex-end;font-size:11px;font-weight:normal;color:#c6c6c6;"><span style="transform:scaleX(0.91);transform-origin:right center">1</span></div>
<div class="r" style="left:362px;top:277.6px;width:47.69999999999999px;height:21.4px;background:#3b3b3b;"></div>
<div class="t" style="left:362px;top:277.8px;width:45.69999999999999px;height:20.4px;line-height:20.4px;justify-content:flex-end;font-size:11px;font-weight:normal;color:#ececec;"><span style="transform:scaleX(0.91);transform-origin:right center">0.044</span></div>
<div class="r" style="left:409.7px;top:277.6px;width:47.80000000000001px;height:21.4px;background:#3b3b3b;"></div>
<div class="t" style="left:409.7px;top:277.8px;width:45.80000000000001px;height:20.4px;line-height:20.4px;justify-content:flex-end;font-size:11px;font-weight:normal;color:#ececec;"><span style="transform:scaleX(0.91);transform-origin:right center">1</span></div>
<div class="r" style="left:457.5px;top:277.6px;width:47.30000000000001px;height:21.4px;background:#3b3b3b;"></div>
<div class="t" style="left:457.5px;top:277.8px;width:45.30000000000001px;height:20.4px;line-height:20.4px;justify-content:flex-end;font-size:11px;font-weight:normal;color:#ececec;"><span style="transform:scaleX(0.91);transform-origin:right center">6.6</span></div>
<div class="r" style="left:504.8px;top:277.6px;width:81.90000000000003px;height:21.4px;background:#3b3b3b;"></div>
<div class="t" style="left:504.8px;top:277.8px;width:79.90000000000003px;height:20.4px;line-height:20.4px;justify-content:flex-end;font-size:11px;font-weight:normal;color:#ececec;"><span style="transform:scaleX(0.91);transform-origin:right center">0.5776</span></div>
<div class="r" style="left:586.7px;top:277.6px;width:67.29999999999995px;height:21.4px;background:#676767;"></div>
<div class="t" style="left:586.7px;top:277.8px;width:65.29999999999995px;height:20.4px;line-height:20.4px;justify-content:flex-end;font-size:11px;font-weight:normal;color:#c6c6c6;"><span style="transform:scaleX(0.91);transform-origin:right center">94.3</span></div>
<div class="r" style="left:654px;top:277.6px;width:57.700000000000045px;height:21.4px;background:#3b3b3b;"></div>
<div class="t" style="left:654px;top:277.8px;width:55.700000000000045px;height:20.4px;line-height:20.4px;justify-content:flex-end;font-size:11px;font-weight:normal;color:#ececec;"><span style="transform:scaleX(0.91);transform-origin:right center">0.5841</span></div>
<div class="r" style="left:711.7px;top:277.6px;width:57.5px;height:21.4px;background:#3b3b3b;"></div>
<div class="t" style="left:711.7px;top:277.8px;width:55.5px;height:20.4px;line-height:20.4px;justify-content:flex-end;font-size:11px;font-weight:normal;color:#ececec;"><span style="transform:scaleX(0.91);transform-origin:right center">0.01133</span></div>
<div class="r" style="left:769.2px;top:277.6px;width:69.0px;height:21.4px;background:#3b3b3b;"></div>
<div class="t" style="left:769.2px;top:277.8px;width:67.0px;height:20.4px;line-height:20.4px;justify-content:flex-end;font-size:11px;font-weight:normal;color:#ececec;"><span style="transform:scaleX(0.91);transform-origin:right center">0.4</span></div>
<div class="r" style="left:838.2px;top:277.6px;width:48.09999999999991px;height:21.4px;background:#3b3b3b;"></div>
<div class="t" style="left:838.2px;top:277.8px;width:46.09999999999991px;height:20.4px;line-height:20.4px;justify-content:flex-end;font-size:11px;font-weight:normal;color:#ececec;"><span style="transform:scaleX(0.91);transform-origin:right center">3.029</span></div>
<div class="r" style="left:886.3px;top:277.6px;width:88.5px;height:21.4px;background:#3b3b3b;"></div>
<div class="t" style="left:886.3px;top:277.8px;width:86.5px;height:20.4px;line-height:20.4px;justify-content:flex-end;font-size:11px;font-weight:normal;color:#ececec;"><span style="transform:scaleX(0.91);transform-origin:right center">1.41</span></div>
<div class="r" style="left:974.8px;top:277.6px;width:81.5px;height:21.4px;background:#3b3b3b;"></div>
<div class="t" style="left:974.8px;top:277.8px;width:79.5px;height:20.4px;line-height:20.4px;justify-content:flex-end;font-size:11px;font-weight:normal;color:#ececec;"><span style="transform:scaleX(0.91);transform-origin:right center">7.16</span></div>
<div class="r" style="left:1056.3px;top:277.6px;width:87.29999999999995px;height:21.4px;background:#3b3b3b;"></div>
<div class="t" style="left:1056.3px;top:277.8px;width:85.29999999999995px;height:20.4px;line-height:20.4px;justify-content:flex-end;font-size:11px;font-weight:normal;color:#ececec;"><span style="transform:scaleX(0.91);transform-origin:right center">0.06075</span></div>
<div class="r" style="left:1143.6px;top:277.6px;width:48.200000000000045px;height:21.4px;background:#3b3b3b;"></div>
<div class="t" style="left:1143.6px;top:277.8px;width:46.200000000000045px;height:20.4px;line-height:20.4px;justify-content:flex-end;font-size:11px;font-weight:normal;color:#ececec;"><span style="transform:scaleX(0.91);transform-origin:right center">1</span></div>
<div class="r" style="left:1191.8px;top:277.6px;width:112.70000000000005px;height:21.4px;background:#3b3b3b;"></div>
<div class="t" style="left:1191.8px;top:277.8px;width:110.70000000000005px;height:20.4px;line-height:20.4px;justify-content:flex-end;font-size:11px;font-weight:normal;color:#ececec;"><span style="transform:scaleX(0.91);transform-origin:right center">0.1</span></div>
<div class="r" style="left:4.5px;top:298px;width:1420px;height:1px;background:#2e2e2e;"></div>
<div class="r" style="left:4.5px;top:299.0px;width:80px;height:21.4px;background:#181818;"></div>
<div class="t" style="left:7px;top:299.2px;width:78px;height:20.4px;line-height:20.4px;justify-content:flex-start;font-size:11px;font-weight:normal;color:#e8e8e8;"><span style="transform:scaleX(0.91);transform-origin:left center">Ileum 2</span></div>
<div class="r" style="left:85px;top:299.0px;width:99.30000000000001px;height:21.4px;background:#3b3b3b;"></div>
<div class="t" style="left:85px;top:299.2px;width:97.30000000000001px;height:20.4px;line-height:20.4px;justify-content:flex-end;font-size:11px;font-weight:normal;color:#ececec;"><span style="transform:scaleX(0.91);transform-origin:right center"></span></div>
<div class="r" style="left:184.3px;top:299.0px;width:60.19999999999999px;height:21.4px;background:#676767;"></div>
<div class="t" style="left:184.3px;top:299.2px;width:58.19999999999999px;height:20.4px;line-height:20.4px;justify-content:flex-end;font-size:11px;font-weight:normal;color:#c6c6c6;"><span style="transform:scaleX(0.91);transform-origin:right center">2.649</span></div>
<div class="r" style="left:244.5px;top:299.0px;width:117.5px;height:21.4px;background:#676767;"></div>
<div class="t" style="left:244.5px;top:299.2px;width:115.5px;height:20.4px;line-height:20.4px;justify-content:flex-end;font-size:11px;font-weight:normal;color:#c6c6c6;"><span style="transform:scaleX(0.91);transform-origin:right center">1</span></div>
<div class="r" style="left:362px;top:299.0px;width:47.69999999999999px;height:21.4px;background:#3b3b3b;"></div>
<div class="t" style="left:362px;top:299.2px;width:45.69999999999999px;height:20.4px;line-height:20.4px;justify-content:flex-end;font-size:11px;font-weight:normal;color:#ececec;"><span style="transform:scaleX(0.91);transform-origin:right center">0.044</span></div>
<div class="r" style="left:409.7px;top:299.0px;width:47.80000000000001px;height:21.4px;background:#3b3b3b;"></div>
<div class="t" style="left:409.7px;top:299.2px;width:45.80000000000001px;height:20.4px;line-height:20.4px;justify-content:flex-end;font-size:11px;font-weight:normal;color:#ececec;"><span style="transform:scaleX(0.91);transform-origin:right center">1</span></div>
<div class="r" style="left:457.5px;top:299.0px;width:47.30000000000001px;height:21.4px;background:#3b3b3b;"></div>
<div class="t" style="left:457.5px;top:299.2px;width:45.30000000000001px;height:20.4px;line-height:20.4px;justify-content:flex-end;font-size:11px;font-weight:normal;color:#ececec;"><span style="transform:scaleX(0.91);transform-origin:right center">6.9</span></div>
<div class="r" style="left:504.8px;top:299.0px;width:81.90000000000003px;height:21.4px;background:#3b3b3b;"></div>
<div class="t" style="left:504.8px;top:299.2px;width:79.90000000000003px;height:20.4px;line-height:20.4px;justify-content:flex-end;font-size:11px;font-weight:normal;color:#ececec;"><span style="transform:scaleX(0.91);transform-origin:right center">0.4171</span></div>
<div class="r" style="left:586.7px;top:299.0px;width:67.29999999999995px;height:21.4px;background:#676767;"></div>
<div class="t" style="left:586.7px;top:299.2px;width:65.29999999999995px;height:20.4px;line-height:20.4px;justify-content:flex-end;font-size:11px;font-weight:normal;color:#c6c6c6;"><span style="transform:scaleX(0.91);transform-origin:right center">70.53</span></div>
<div class="r" style="left:654px;top:299.0px;width:57.700000000000045px;height:21.4px;background:#3b3b3b;"></div>
<div class="t" style="left:654px;top:299.2px;width:55.700000000000045px;height:20.4px;line-height:20.4px;justify-content:flex-end;font-size:11px;font-weight:normal;color:#ececec;"><span style="transform:scaleX(0.91);transform-origin:right center">0.5841</span></div>
<div class="r" style="left:711.7px;top:299.0px;width:57.5px;height:21.4px;background:#3b3b3b;"></div>
<div class="t" style="left:711.7px;top:299.2px;width:55.5px;height:20.4px;line-height:20.4px;justify-content:flex-end;font-size:11px;font-weight:normal;color:#ececec;"><span style="transform:scaleX(0.91);transform-origin:right center">9.803e-03</span></div>
<div class="r" style="left:769.2px;top:299.0px;width:69.0px;height:21.4px;background:#3b3b3b;"></div>
<div class="t" style="left:769.2px;top:299.2px;width:67.0px;height:20.4px;line-height:20.4px;justify-content:flex-end;font-size:11px;font-weight:normal;color:#ececec;"><span style="transform:scaleX(0.91);transform-origin:right center">0.4</span></div>
<div class="r" style="left:838.2px;top:299.0px;width:48.09999999999991px;height:21.4px;background:#3b3b3b;"></div>
<div class="t" style="left:838.2px;top:299.2px;width:46.09999999999991px;height:20.4px;line-height:20.4px;justify-content:flex-end;font-size:11px;font-weight:normal;color:#ececec;"><span style="transform:scaleX(0.91);transform-origin:right center">2.569</span></div>
<div class="r" style="left:886.3px;top:299.0px;width:88.5px;height:21.4px;background:#3b3b3b;"></div>
<div class="t" style="left:886.3px;top:299.2px;width:86.5px;height:20.4px;line-height:20.4px;justify-content:flex-end;font-size:11px;font-weight:normal;color:#ececec;"><span style="transform:scaleX(0.91);transform-origin:right center">1.16</span></div>
<div class="r" style="left:974.8px;top:299.0px;width:81.5px;height:21.4px;background:#3b3b3b;"></div>
<div class="t" style="left:974.8px;top:299.2px;width:79.5px;height:20.4px;line-height:20.4px;justify-content:flex-end;font-size:11px;font-weight:normal;color:#ececec;"><span style="transform:scaleX(0.91);transform-origin:right center">5.92</span></div>
<div class="r" style="left:1056.3px;top:299.0px;width:87.29999999999995px;height:21.4px;background:#3b3b3b;"></div>
<div class="t" style="left:1056.3px;top:299.2px;width:85.29999999999995px;height:20.4px;line-height:20.4px;justify-content:flex-end;font-size:11px;font-weight:normal;color:#ececec;"><span style="transform:scaleX(0.91);transform-origin:right center">0.1048</span></div>
<div class="r" style="left:1143.6px;top:299.0px;width:48.200000000000045px;height:21.4px;background:#3b3b3b;"></div>
<div class="t" style="left:1143.6px;top:299.2px;width:46.200000000000045px;height:20.4px;line-height:20.4px;justify-content:flex-end;font-size:11px;font-weight:normal;color:#ececec;"><span style="transform:scaleX(0.91);transform-origin:right center">1</span></div>
<div class="r" style="left:1191.8px;top:299.0px;width:112.70000000000005px;height:21.4px;background:#3b3b3b;"></div>
<div class="t" style="left:1191.8px;top:299.2px;width:110.70000000000005px;height:20.4px;line-height:20.4px;justify-content:flex-end;font-size:11px;font-weight:normal;color:#ececec;"><span style="transform:scaleX(0.91);transform-origin:right center">0.1</span></div>
<div class="r" style="left:4.5px;top:319px;width:1420px;height:1px;background:#2e2e2e;"></div>
<div class="r" style="left:4.5px;top:320.4px;width:80px;height:21.4px;background:#181818;"></div>
<div class="t" style="left:7px;top:320.59999999999997px;width:78px;height:20.4px;line-height:20.4px;justify-content:flex-start;font-size:11px;font-weight:normal;color:#e8e8e8;"><span style="transform:scaleX(0.91);transform-origin:left center">Ileum 3</span></div>
<div class="r" style="left:85px;top:320.4px;width:99.30000000000001px;height:21.4px;background:#3b3b3b;"></div>
<div class="t" style="left:85px;top:320.59999999999997px;width:97.30000000000001px;height:20.4px;line-height:20.4px;justify-content:flex-end;font-size:11px;font-weight:normal;color:#ececec;"><span style="transform:scaleX(0.91);transform-origin:right center"></span></div>
<div class="r" style="left:184.3px;top:320.4px;width:60.19999999999999px;height:21.4px;background:#676767;"></div>
<div class="t" style="left:184.3px;top:320.59999999999997px;width:58.19999999999999px;height:20.4px;line-height:20.4px;justify-content:flex-end;font-size:11px;font-weight:normal;color:#c6c6c6;"><span style="transform:scaleX(0.91);transform-origin:right center">2.589</span></div>
<div class="r" style="left:244.5px;top:320.4px;width:117.5px;height:21.4px;background:#676767;"></div>
<div class="t" style="left:244.5px;top:320.59999999999997px;width:115.5px;height:20.4px;line-height:20.4px;justify-content:flex-end;font-size:11px;font-weight:normal;color:#c6c6c6;"><span style="transform:scaleX(0.91);transform-origin:right center">1</span></div>
<div class="r" style="left:362px;top:320.4px;width:47.69999999999999px;height:21.4px;background:#3b3b3b;"></div>
<div class="t" style="left:362px;top:320.59999999999997px;width:45.69999999999999px;height:20.4px;line-height:20.4px;justify-content:flex-end;font-size:11px;font-weight:normal;color:#ececec;"><span style="transform:scaleX(0.91);transform-origin:right center">0.044</span></div>
<div class="r" style="left:409.7px;top:320.4px;width:47.80000000000001px;height:21.4px;background:#3b3b3b;"></div>
<div class="t" style="left:409.7px;top:320.59999999999997px;width:45.80000000000001px;height:20.4px;line-height:20.4px;justify-content:flex-end;font-size:11px;font-weight:normal;color:#ececec;"><span style="transform:scaleX(0.91);transform-origin:right center">1</span></div>
<div class="r" style="left:457.5px;top:320.4px;width:47.30000000000001px;height:21.4px;background:#3b3b3b;"></div>
<div class="t" style="left:457.5px;top:320.59999999999997px;width:45.30000000000001px;height:20.4px;line-height:20.4px;justify-content:flex-end;font-size:11px;font-weight:normal;color:#ececec;"><span style="transform:scaleX(0.91);transform-origin:right center">7.4</span></div>
<div class="r" style="left:504.8px;top:320.4px;width:81.90000000000003px;height:21.4px;background:#3b3b3b;"></div>
<div class="t" style="left:504.8px;top:320.59999999999997px;width:79.90000000000003px;height:20.4px;line-height:20.4px;justify-content:flex-end;font-size:11px;font-weight:normal;color:#ececec;"><span style="transform:scaleX(0.91);transform-origin:right center">0.2888</span></div>
<div class="r" style="left:586.7px;top:320.4px;width:67.29999999999995px;height:21.4px;background:#676767;"></div>
<div class="t" style="left:586.7px;top:320.59999999999997px;width:65.29999999999995px;height:20.4px;line-height:20.4px;justify-content:flex-end;font-size:11px;font-weight:normal;color:#c6c6c6;"><span style="transform:scaleX(0.91);transform-origin:right center">49.84</span></div>
<div class="r" style="left:654px;top:320.4px;width:57.700000000000045px;height:21.4px;background:#3b3b3b;"></div>
<div class="t" style="left:654px;top:320.59999999999997px;width:55.700000000000045px;height:20.4px;line-height:20.4px;justify-content:flex-end;font-size:11px;font-weight:normal;color:#ececec;"><span style="transform:scaleX(0.91);transform-origin:right center">0.5841</span></div>
<div class="r" style="left:711.7px;top:320.4px;width:57.5px;height:21.4px;background:#3b3b3b;"></div>
<div class="t" style="left:711.7px;top:320.59999999999997px;width:55.5px;height:20.4px;line-height:20.4px;justify-content:flex-end;font-size:11px;font-weight:normal;color:#ececec;"><span style="transform:scaleX(0.91);transform-origin:right center">8.24e-03</span></div>
<div class="r" style="left:769.2px;top:320.4px;width:69.0px;height:21.4px;background:#3b3b3b;"></div>
<div class="t" style="left:769.2px;top:320.59999999999997px;width:67.0px;height:20.4px;line-height:20.4px;justify-content:flex-end;font-size:11px;font-weight:normal;color:#ececec;"><span style="transform:scaleX(0.91);transform-origin:right center">0.4</span></div>
<div class="r" style="left:838.2px;top:320.4px;width:48.09999999999991px;height:21.4px;background:#3b3b3b;"></div>
<div class="t" style="left:838.2px;top:320.59999999999997px;width:46.09999999999991px;height:20.4px;line-height:20.4px;justify-content:flex-end;font-size:11px;font-weight:normal;color:#ececec;"><span style="transform:scaleX(0.91);transform-origin:right center">2.109</span></div>
<div class="r" style="left:886.3px;top:320.4px;width:88.5px;height:21.4px;background:#3b3b3b;"></div>
<div class="t" style="left:886.3px;top:320.59999999999997px;width:86.5px;height:20.4px;line-height:20.4px;justify-content:flex-end;font-size:11px;font-weight:normal;color:#ececec;"><span style="transform:scaleX(0.91);transform-origin:right center">0.14</span></div>
<div class="r" style="left:974.8px;top:320.4px;width:81.5px;height:21.4px;background:#3b3b3b;"></div>
<div class="t" style="left:974.8px;top:320.59999999999997px;width:79.5px;height:20.4px;line-height:20.4px;justify-content:flex-end;font-size:11px;font-weight:normal;color:#ececec;"><span style="transform:scaleX(0.91);transform-origin:right center">4.68</span></div>
<div class="r" style="left:1056.3px;top:320.4px;width:87.29999999999995px;height:21.4px;background:#3b3b3b;"></div>
<div class="t" style="left:1056.3px;top:320.59999999999997px;width:85.29999999999995px;height:20.4px;line-height:20.4px;justify-content:flex-end;font-size:11px;font-weight:normal;color:#ececec;"><span style="transform:scaleX(0.91);transform-origin:right center">0.2042</span></div>
<div class="r" style="left:1143.6px;top:320.4px;width:48.200000000000045px;height:21.4px;background:#3b3b3b;"></div>
<div class="t" style="left:1143.6px;top:320.59999999999997px;width:46.200000000000045px;height:20.4px;line-height:20.4px;justify-content:flex-end;font-size:11px;font-weight:normal;color:#ececec;"><span style="transform:scaleX(0.91);transform-origin:right center">1</span></div>
<div class="r" style="left:1191.8px;top:320.4px;width:112.70000000000005px;height:21.4px;background:#3b3b3b;"></div>
<div class="t" style="left:1191.8px;top:320.59999999999997px;width:110.70000000000005px;height:20.4px;line-height:20.4px;justify-content:flex-end;font-size:11px;font-weight:normal;color:#ececec;"><span style="transform:scaleX(0.91);transform-origin:right center">0.1</span></div>
<div class="r" style="left:4.5px;top:341px;width:1420px;height:1px;background:#2e2e2e;"></div>
<div class="r" style="left:4.5px;top:341.79999999999995px;width:80px;height:21.4px;background:#181818;"></div>
<div class="t" style="left:7px;top:341.99999999999994px;width:78px;height:20.4px;line-height:20.4px;justify-content:flex-start;font-size:11px;font-weight:normal;color:#e8e8e8;"><span style="transform:scaleX(0.91);transform-origin:left center">Caecum</span></div>
<div class="r" style="left:85px;top:341.79999999999995px;width:99.30000000000001px;height:21.4px;background:#3b3b3b;"></div>
<div class="t" style="left:85px;top:341.99999999999994px;width:97.30000000000001px;height:20.4px;line-height:20.4px;justify-content:flex-end;font-size:11px;font-weight:normal;color:#ececec;"><span style="transform:scaleX(0.91);transform-origin:right center"></span></div>
<div class="r" style="left:184.3px;top:341.79999999999995px;width:60.19999999999999px;height:21.4px;background:#676767;"></div>
<div class="t" style="left:184.3px;top:341.99999999999994px;width:58.19999999999999px;height:20.4px;line-height:20.4px;justify-content:flex-end;font-size:11px;font-weight:normal;color:#c6c6c6;"><span style="transform:scaleX(0.91);transform-origin:right center">2.101</span></div>
<div class="r" style="left:244.5px;top:341.79999999999995px;width:117.5px;height:21.4px;background:#676767;"></div>
<div class="t" style="left:244.5px;top:341.99999999999994px;width:115.5px;height:20.4px;line-height:20.4px;justify-content:flex-end;font-size:11px;font-weight:normal;color:#c6c6c6;"><span style="transform:scaleX(0.91);transform-origin:right center">1</span></div>
<div class="r" style="left:362px;top:341.79999999999995px;width:47.69999999999999px;height:21.4px;background:#3b3b3b;"></div>
<div class="t" style="left:362px;top:341.99999999999994px;width:45.69999999999999px;height:20.4px;line-height:20.4px;justify-content:flex-end;font-size:11px;font-weight:normal;color:#ececec;"><span style="transform:scaleX(0.91);transform-origin:right center">0.044</span></div>
<div class="r" style="left:409.7px;top:341.79999999999995px;width:47.80000000000001px;height:21.4px;background:#3b3b3b;"></div>
<div class="t" style="left:409.7px;top:341.99999999999994px;width:45.80000000000001px;height:20.4px;line-height:20.4px;justify-content:flex-end;font-size:11px;font-weight:normal;color:#ececec;"><span style="transform:scaleX(0.91);transform-origin:right center">1</span></div>
<div class="r" style="left:457.5px;top:341.79999999999995px;width:47.30000000000001px;height:21.4px;background:#3b3b3b;"></div>
<div class="t" style="left:457.5px;top:341.99999999999994px;width:45.30000000000001px;height:20.4px;line-height:20.4px;justify-content:flex-end;font-size:11px;font-weight:normal;color:#ececec;"><span style="transform:scaleX(0.91);transform-origin:right center">6.4</span></div>
<div class="r" style="left:504.8px;top:341.79999999999995px;width:81.90000000000003px;height:21.4px;background:#3b3b3b;"></div>
<div class="t" style="left:504.8px;top:341.99999999999994px;width:79.90000000000003px;height:20.4px;line-height:20.4px;justify-content:flex-end;font-size:11px;font-weight:normal;color:#ececec;"><span style="transform:scaleX(0.91);transform-origin:right center">4.191</span></div>
<div class="r" style="left:586.7px;top:341.79999999999995px;width:67.29999999999995px;height:21.4px;background:#676767;"></div>
<div class="t" style="left:586.7px;top:341.99999999999994px;width:65.29999999999995px;height:20.4px;line-height:20.4px;justify-content:flex-end;font-size:11px;font-weight:normal;color:#c6c6c6;"><span style="transform:scaleX(0.91);transform-origin:right center">47.49</span></div>
<div class="r" style="left:654px;top:341.79999999999995px;width:57.700000000000045px;height:21.4px;background:#3b3b3b;"></div>
<div class="t" style="left:654px;top:341.99999999999994px;width:55.700000000000045px;height:20.4px;line-height:20.4px;justify-content:flex-end;font-size:11px;font-weight:normal;color:#ececec;"><span style="transform:scaleX(0.91);transform-origin:right center">0.1319</span></div>
<div class="r" style="left:711.7px;top:341.79999999999995px;width:57.5px;height:21.4px;background:#3b3b3b;"></div>
<div class="t" style="left:711.7px;top:341.99999999999994px;width:55.5px;height:20.4px;line-height:20.4px;justify-content:flex-end;font-size:11px;font-weight:normal;color:#ececec;"><span style="transform:scaleX(0.91);transform-origin:right center">0.03385</span></div>
<div class="r" style="left:769.2px;top:341.79999999999995px;width:69.0px;height:21.4px;background:#3b3b3b;"></div>
<div class="t" style="left:769.2px;top:341.99999999999994px;width:67.0px;height:20.4px;line-height:20.4px;justify-content:flex-end;font-size:11px;font-weight:normal;color:#ececec;"><span style="transform:scaleX(0.91);transform-origin:right center">0.1</span></div>
<div class="r" style="left:838.2px;top:341.79999999999995px;width:48.09999999999991px;height:21.4px;background:#3b3b3b;"></div>
<div class="t" style="left:838.2px;top:341.99999999999994px;width:46.09999999999991px;height:20.4px;line-height:20.4px;justify-content:flex-end;font-size:11px;font-weight:normal;color:#ececec;"><span style="transform:scaleX(0.91);transform-origin:right center">1.79</span></div>
<div class="r" style="left:886.3px;top:341.79999999999995px;width:88.5px;height:21.4px;background:#3b3b3b;"></div>
<div class="t" style="left:886.3px;top:341.99999999999994px;width:86.5px;height:20.4px;line-height:20.4px;justify-content:flex-end;font-size:11px;font-weight:normal;color:#ececec;"><span style="transform:scaleX(0.91);transform-origin:right center">0</span></div>
<div class="r" style="left:974.8px;top:341.79999999999995px;width:81.5px;height:21.4px;background:#3b3b3b;"></div>
<div class="t" style="left:974.8px;top:341.99999999999994px;width:79.5px;height:20.4px;line-height:20.4px;justify-content:flex-end;font-size:11px;font-weight:normal;color:#ececec;"><span style="transform:scaleX(0.91);transform-origin:right center">3.92</span></div>
<div class="r" style="left:1056.3px;top:341.79999999999995px;width:87.29999999999995px;height:21.4px;background:#3b3b3b;"></div>
<div class="t" style="left:1056.3px;top:341.99999999999994px;width:85.29999999999995px;height:20.4px;line-height:20.4px;justify-content:flex-end;font-size:11px;font-weight:normal;color:#ececec;"><span style="transform:scaleX(0.91);transform-origin:right center">0.3431</span></div>
<div class="r" style="left:1143.6px;top:341.79999999999995px;width:48.200000000000045px;height:21.4px;background:#3b3b3b;"></div>
<div class="t" style="left:1143.6px;top:341.99999999999994px;width:46.200000000000045px;height:20.4px;line-height:20.4px;justify-content:flex-end;font-size:11px;font-weight:normal;color:#ececec;"><span style="transform:scaleX(0.91);transform-origin:right center">1</span></div>
<div class="r" style="left:1191.8px;top:341.79999999999995px;width:112.70000000000005px;height:21.4px;background:#3b3b3b;"></div>
<div class="t" style="left:1191.8px;top:341.99999999999994px;width:110.70000000000005px;height:20.4px;line-height:20.4px;justify-content:flex-end;font-size:11px;font-weight:normal;color:#ececec;"><span style="transform:scaleX(0.91);transform-origin:right center">0.1</span></div>
<div class="r" style="left:4.5px;top:362px;width:1420px;height:1px;background:#2e2e2e;"></div>
<div class="r" style="left:4.5px;top:363.2px;width:80px;height:21.4px;background:#181818;"></div>
<div class="t" style="left:7px;top:363.4px;width:78px;height:20.4px;line-height:20.4px;justify-content:flex-start;font-size:11px;font-weight:normal;color:#e8e8e8;"><span style="transform:scaleX(0.91);transform-origin:left center">Ascending Colon</span></div>
<div class="r" style="left:85px;top:363.2px;width:99.30000000000001px;height:21.4px;background:#3b3b3b;"></div>
<div class="t" style="left:85px;top:363.4px;width:97.30000000000001px;height:20.4px;line-height:20.4px;justify-content:flex-end;font-size:11px;font-weight:normal;color:#ececec;"><span style="transform:scaleX(0.91);transform-origin:right center"></span></div>
<div class="r" style="left:184.3px;top:363.2px;width:60.19999999999999px;height:21.4px;background:#676767;"></div>
<div class="t" style="left:184.3px;top:363.4px;width:58.19999999999999px;height:20.4px;line-height:20.4px;justify-content:flex-end;font-size:11px;font-weight:normal;color:#c6c6c6;"><span style="transform:scaleX(0.91);transform-origin:right center">4.347</span></div>
<div class="r" style="left:244.5px;top:363.2px;width:117.5px;height:21.4px;background:#676767;"></div>
<div class="t" style="left:244.5px;top:363.4px;width:115.5px;height:20.4px;line-height:20.4px;justify-content:flex-end;font-size:11px;font-weight:normal;color:#c6c6c6;"><span style="transform:scaleX(0.91);transform-origin:right center">1</span></div>
<div class="r" style="left:362px;top:363.2px;width:47.69999999999999px;height:21.4px;background:#3b3b3b;"></div>
<div class="t" style="left:362px;top:363.4px;width:45.69999999999999px;height:20.4px;line-height:20.4px;justify-content:flex-end;font-size:11px;font-weight:normal;color:#ececec;"><span style="transform:scaleX(0.91);transform-origin:right center">0.044</span></div>
<div class="r" style="left:409.7px;top:363.2px;width:47.80000000000001px;height:21.4px;background:#3b3b3b;"></div>
<div class="t" style="left:409.7px;top:363.4px;width:45.80000000000001px;height:20.4px;line-height:20.4px;justify-content:flex-end;font-size:11px;font-weight:normal;color:#ececec;"><span style="transform:scaleX(0.91);transform-origin:right center">1</span></div>
<div class="r" style="left:457.5px;top:363.2px;width:47.30000000000001px;height:21.4px;background:#3b3b3b;"></div>
<div class="t" style="left:457.5px;top:363.4px;width:45.30000000000001px;height:20.4px;line-height:20.4px;justify-content:flex-end;font-size:11px;font-weight:normal;color:#ececec;"><span style="transform:scaleX(0.91);transform-origin:right center">6.8</span></div>
<div class="r" style="left:504.8px;top:363.2px;width:81.90000000000003px;height:21.4px;background:#3b3b3b;"></div>
<div class="t" style="left:504.8px;top:363.4px;width:79.90000000000003px;height:20.4px;line-height:20.4px;justify-content:flex-end;font-size:11px;font-weight:normal;color:#ececec;"><span style="transform:scaleX(0.91);transform-origin:right center">12.57</span></div>
<div class="r" style="left:586.7px;top:363.2px;width:67.29999999999995px;height:21.4px;background:#676767;"></div>
<div class="t" style="left:586.7px;top:363.4px;width:65.29999999999995px;height:20.4px;line-height:20.4px;justify-content:flex-end;font-size:11px;font-weight:normal;color:#c6c6c6;"><span style="transform:scaleX(0.91);transform-origin:right center">50.33</span></div>
<div class="r" style="left:654px;top:363.2px;width:57.700000000000045px;height:21.4px;background:#3b3b3b;"></div>
<div class="t" style="left:654px;top:363.4px;width:55.700000000000045px;height:20.4px;line-height:20.4px;justify-content:flex-end;font-size:11px;font-weight:normal;color:#ececec;"><span style="transform:scaleX(0.91);transform-origin:right center">0.2765</span></div>
<div class="r" style="left:711.7px;top:363.2px;width:57.5px;height:21.4px;background:#3b3b3b;"></div>
<div class="t" style="left:711.7px;top:363.4px;width:55.5px;height:20.4px;line-height:20.4px;justify-content:flex-end;font-size:11px;font-weight:normal;color:#ececec;"><span style="transform:scaleX(0.91);transform-origin:right center">0.02407</span></div>
<div class="r" style="left:769.2px;top:363.2px;width:69.0px;height:21.4px;background:#3b3b3b;"></div>
<div class="t" style="left:769.2px;top:363.4px;width:67.0px;height:20.4px;line-height:20.4px;justify-content:flex-end;font-size:11px;font-weight:normal;color:#ececec;"><span style="transform:scaleX(0.91);transform-origin:right center">0.1</span></div>
<div class="r" style="left:838.2px;top:363.2px;width:48.09999999999991px;height:21.4px;background:#3b3b3b;"></div>
<div class="t" style="left:838.2px;top:363.4px;width:46.09999999999991px;height:20.4px;line-height:20.4px;justify-content:flex-end;font-size:11px;font-weight:normal;color:#ececec;"><span style="transform:scaleX(0.91);transform-origin:right center">2.48</span></div>
<div class="r" style="left:886.3px;top:363.2px;width:88.5px;height:21.4px;background:#3b3b3b;"></div>
<div class="t" style="left:886.3px;top:363.4px;width:86.5px;height:20.4px;line-height:20.4px;justify-content:flex-end;font-size:11px;font-weight:normal;color:#ececec;"><span style="transform:scaleX(0.91);transform-origin:right center">0</span></div>
<div class="r" style="left:974.8px;top:363.2px;width:81.5px;height:21.4px;background:#3b3b3b;"></div>
<div class="t" style="left:974.8px;top:363.4px;width:79.5px;height:20.4px;line-height:20.4px;justify-content:flex-end;font-size:11px;font-weight:normal;color:#ececec;"><span style="transform:scaleX(0.91);transform-origin:right center">3.5</span></div>
<div class="r" style="left:1056.3px;top:363.2px;width:87.29999999999995px;height:21.4px;background:#3b3b3b;"></div>
<div class="t" style="left:1056.3px;top:363.4px;width:85.29999999999995px;height:20.4px;line-height:20.4px;justify-content:flex-end;font-size:11px;font-weight:normal;color:#ececec;"><span style="transform:scaleX(0.91);transform-origin:right center">0.3106</span></div>
<div class="r" style="left:1143.6px;top:363.2px;width:48.200000000000045px;height:21.4px;background:#3b3b3b;"></div>
<div class="t" style="left:1143.6px;top:363.4px;width:46.200000000000045px;height:20.4px;line-height:20.4px;justify-content:flex-end;font-size:11px;font-weight:normal;color:#ececec;"><span style="transform:scaleX(0.91);transform-origin:right center">1</span></div>
<div class="r" style="left:1191.8px;top:363.2px;width:112.70000000000005px;height:21.4px;background:#3b3b3b;"></div>
<div class="t" style="left:1191.8px;top:363.4px;width:110.70000000000005px;height:20.4px;line-height:20.4px;justify-content:flex-end;font-size:11px;font-weight:normal;color:#ececec;"><span style="transform:scaleX(0.91);transform-origin:right center">0.1</span></div>
<div class="r" style="left:4.5px;top:383px;width:1420px;height:1px;background:#2e2e2e;"></div>
<div class="r" style="left:84.2px;top:192px;width:1.6px;height:192.6px;background:#2f2f2f;opacity:.85"></div>
<div class="r" style="left:183.5px;top:192px;width:1.6px;height:192.6px;background:#2f2f2f;opacity:.85"></div>
<div class="r" style="left:243.7px;top:192px;width:1.6px;height:192.6px;background:#2f2f2f;opacity:.85"></div>
<div class="r" style="left:361.2px;top:192px;width:1.6px;height:192.6px;background:#2f2f2f;opacity:.85"></div>
<div class="r" style="left:408.9px;top:192px;width:1.6px;height:192.6px;background:#2f2f2f;opacity:.85"></div>
<div class="r" style="left:456.7px;top:192px;width:1.6px;height:192.6px;background:#2f2f2f;opacity:.85"></div>
<div class="r" style="left:504.0px;top:192px;width:1.6px;height:192.6px;background:#2f2f2f;opacity:.85"></div>
<div class="r" style="left:585.9000000000001px;top:192px;width:1.6px;height:192.6px;background:#2f2f2f;opacity:.85"></div>
<div class="r" style="left:653.2px;top:192px;width:1.6px;height:192.6px;background:#2f2f2f;opacity:.85"></div>
<div class="r" style="left:710.9000000000001px;top:192px;width:1.6px;height:192.6px;background:#2f2f2f;opacity:.85"></div>
<div class="r" style="left:768.4000000000001px;top:192px;width:1.6px;height:192.6px;background:#2f2f2f;opacity:.85"></div>
<div class="r" style="left:837.4000000000001px;top:192px;width:1.6px;height:192.6px;background:#2f2f2f;opacity:.85"></div>
<div class="r" style="left:885.5px;top:192px;width:1.6px;height:192.6px;background:#2f2f2f;opacity:.85"></div>
<div class="r" style="left:974.0px;top:192px;width:1.6px;height:192.6px;background:#2f2f2f;opacity:.85"></div>
<div class="r" style="left:1055.5px;top:192px;width:1.6px;height:192.6px;background:#2f2f2f;opacity:.85"></div>
<div class="r" style="left:1142.8px;top:192px;width:1.6px;height:192.6px;background:#2f2f2f;opacity:.85"></div>
<div class="r" style="left:1191.0px;top:192px;width:1.6px;height:192.6px;background:#2f2f2f;opacity:.85"></div>
</div>
<div class="r" style="left:5px;top:376px;width:1158px;height:6.5px;background:#5c5c5c;border-radius:3px"></div>
<div class="r" style="left:1300.7px;top:171.3px;width:5.5px;height:181.6px;background:#5c5c5c;border-radius:3px"></div>
<div class="r" style="left:1180.3px;top:381px;width:127.7px;height:32.8px;box-sizing:border-box;border:4px solid #ff00ff;border-radius:6px"></div>
<div class="t" style="left:1189.3px;top:388.7px;width:80px;height:20px;line-height:20px;justify-content:flex-start;font-size:11px;font-weight:normal;color:#ececec;"><span style="transform:scaleX(0.91);transform-origin:left center">Display Turnover</span></div>
<div class="r" style="left:1269px;top:390.6px;width:31.7px;height:15.8px;background:#2fdc2a;border-radius:9px"></div>
<div class="r" style="left:1285.8px;top:391.7px;width:13.7px;height:13.7px;background:#ffffff;border-radius:50%"></div>
<div class="t" style="left:6.5px;top:393.8px;width:300px;height:18px;line-height:18px;justify-content:flex-start;font-size:12.5px;font-weight:bold;color:#f6f6f6;"><span style="transform:scaleX(0.959);transform-origin:left center">Enzyme and Transporter Distribution</span></div>
<div class="r" style="left:4.5px;top:415px;width:427.1px;height:20px;background:#141414;"></div>
<div class="r" style="left:4.5px;top:415px;width:427.1px;height:1px;background:#6a6a6a;"></div>
<div class="r" style="left:4.5px;top:434px;width:427.1px;height:1px;background:#6a6a6a;"></div>
<div class="r" style="left:4.5px;top:415px;width:1px;height:20px;background:#6a6a6a;"></div>
<div class="r" style="left:430.6px;top:415px;width:1px;height:20px;background:#6a6a6a;"></div>
<div class="r" style="left:84px;top:415px;width:1px;height:20px;background:#6a6a6a;"></div>
<div class="r" style="left:262px;top:415px;width:1px;height:20px;background:#6a6a6a;"></div>
<div class="t" style="left:5px;top:415.5px;width:79.5px;height:18.5px;line-height:18.5px;justify-content:center;font-size:11px;font-weight:bold;color:#f4f4f4;"><span style="transform:scaleX(0.865);transform-origin:center center"></span></div>
<div class="t" style="left:84.5px;top:415.5px;width:178.10000000000002px;height:18.5px;line-height:18.5px;justify-content:center;font-size:11px;font-weight:bold;color:#f4f4f4;"><span style="transform:scaleX(0.865);transform-origin:center center">CYP3A4 Wild Enterocytes Expression</span></div>
<div class="t" style="left:262.6px;top:415.5px;width:169.0px;height:18.5px;line-height:18.5px;justify-content:center;font-size:11px;font-weight:bold;color:#f4f4f4;"><span style="transform:scaleX(0.865);transform-origin:center center">CYP3A4 Wild Enterocytes Turnover</span></div>
<div class="r" style="left:4.5px;top:435.0px;width:80.0px;height:21.4px;background:#181818;"></div>
<div class="r" style="left:84.5px;top:435.0px;width:347.1px;height:21.4px;background:#3b3b3b;"></div>
<div class="t" style="left:7px;top:435.3px;width:80px;height:20.4px;line-height:20.4px;justify-content:flex-start;font-size:11px;font-weight:normal;color:#e8e8e8;"><span style="transform:scaleX(0.91);transform-origin:left center">Stomach</span></div>
<div class="t" style="left:84.5px;top:435.3px;width:175.60000000000002px;height:20.4px;line-height:20.4px;justify-content:flex-end;font-size:11px;font-weight:normal;color:#ececec;"><span style="transform:scaleX(0.91);transform-origin:right center">0</span></div>
<div class="t" style="left:262.6px;top:435.3px;width:166.5px;height:20.4px;line-height:20.4px;justify-content:flex-end;font-size:11px;font-weight:normal;color:#ececec;"><span style="transform:scaleX(0.91);transform-origin:right center">8.333e-06</span></div>
<div class="r" style="left:4.5px;top:455px;width:427.1px;height:1px;background:#2e2e2e;"></div>
<div class="r" style="left:4.5px;top:456.4px;width:80.0px;height:21.4px;background:#181818;"></div>
<div class="r" style="left:84.5px;top:456.4px;width:347.1px;height:21.4px;background:#3b3b3b;"></div>
<div class="t" style="left:7px;top:456.7px;width:80px;height:20.4px;line-height:20.4px;justify-content:flex-start;font-size:11px;font-weight:normal;color:#e8e8e8;"><span style="transform:scaleX(0.91);transform-origin:left center">Duodenum</span></div>
<div class="t" style="left:84.5px;top:456.7px;width:175.60000000000002px;height:20.4px;line-height:20.4px;justify-content:flex-end;font-size:11px;font-weight:normal;color:#ececec;"><span style="transform:scaleX(0.91);transform-origin:right center">1.832e-03</span></div>
<div class="t" style="left:262.6px;top:456.7px;width:166.5px;height:20.4px;line-height:20.4px;justify-content:flex-end;font-size:11px;font-weight:normal;color:#ececec;"><span style="transform:scaleX(0.91);transform-origin:right center">8.333e-06</span></div>
<div class="r" style="left:4.5px;top:477px;width:427.1px;height:1px;background:#2e2e2e;"></div>
<div class="r" style="left:4.5px;top:477.8px;width:80.0px;height:21.4px;background:#181818;"></div>
<div class="r" style="left:84.5px;top:477.8px;width:347.1px;height:21.4px;background:#3b3b3b;"></div>
<div class="t" style="left:7px;top:478.1px;width:80px;height:20.4px;line-height:20.4px;justify-content:flex-start;font-size:11px;font-weight:normal;color:#e8e8e8;"><span style="transform:scaleX(0.91);transform-origin:left center">Jejunum 1</span></div>
<div class="t" style="left:84.5px;top:478.1px;width:175.60000000000002px;height:20.4px;line-height:20.4px;justify-content:flex-end;font-size:11px;font-weight:normal;color:#ececec;"><span style="transform:scaleX(0.91);transform-origin:right center">2.888e-03</span></div>
<div class="t" style="left:262.6px;top:478.1px;width:166.5px;height:20.4px;line-height:20.4px;justify-content:flex-end;font-size:11px;font-weight:normal;color:#ececec;"><span style="transform:scaleX(0.91);transform-origin:right center">8.333e-06</span></div>
<div class="r" style="left:4.5px;top:498px;width:427.1px;height:1px;background:#2e2e2e;"></div>
<div class="r" style="left:4.5px;top:499.2px;width:80.0px;height:21.4px;background:#181818;"></div>
<div class="r" style="left:84.5px;top:499.2px;width:347.1px;height:21.4px;background:#3b3b3b;"></div>
<div class="t" style="left:7px;top:499.5px;width:80px;height:20.4px;line-height:20.4px;justify-content:flex-start;font-size:11px;font-weight:normal;color:#e8e8e8;"><span style="transform:scaleX(0.91);transform-origin:left center">Jejunum 2</span></div>
<div class="t" style="left:84.5px;top:499.5px;width:175.60000000000002px;height:20.4px;line-height:20.4px;justify-content:flex-end;font-size:11px;font-weight:normal;color:#ececec;"><span style="transform:scaleX(0.91);transform-origin:right center">2.879e-03</span></div>
<div class="t" style="left:262.6px;top:499.5px;width:166.5px;height:20.4px;line-height:20.4px;justify-content:flex-end;font-size:11px;font-weight:normal;color:#ececec;"><span style="transform:scaleX(0.91);transform-origin:right center">8.333e-06</span></div>
<div class="r" style="left:4.5px;top:519px;width:427.1px;height:1px;background:#2e2e2e;"></div>
<div class="r" style="left:4.5px;top:520.6px;width:80.0px;height:21.4px;background:#181818;"></div>
<div class="r" style="left:84.5px;top:520.6px;width:347.1px;height:21.4px;background:#3b3b3b;"></div>
<div class="t" style="left:7px;top:520.9px;width:80px;height:20.4px;line-height:20.4px;justify-content:flex-start;font-size:11px;font-weight:normal;color:#e8e8e8;"><span style="transform:scaleX(0.91);transform-origin:left center">Ileum 1</span></div>
<div class="t" style="left:84.5px;top:520.9px;width:175.60000000000002px;height:20.4px;line-height:20.4px;justify-content:flex-end;font-size:11px;font-weight:normal;color:#ececec;"><span style="transform:scaleX(0.91);transform-origin:right center">9.069e-04</span></div>
<div class="t" style="left:262.6px;top:520.9px;width:166.5px;height:20.4px;line-height:20.4px;justify-content:flex-end;font-size:11px;font-weight:normal;color:#ececec;"><span style="transform:scaleX(0.91);transform-origin:right center">8.333e-06</span></div>
<div class="r" style="left:4.5px;top:541px;width:427.1px;height:1px;background:#2e2e2e;"></div>
<div class="r" style="left:4.5px;top:542.0px;width:80.0px;height:21.4px;background:#181818;"></div>
<div class="r" style="left:84.5px;top:542.0px;width:347.1px;height:21.4px;background:#3b3b3b;"></div>
<div class="t" style="left:7px;top:542.3px;width:80px;height:20.4px;line-height:20.4px;justify-content:flex-start;font-size:11px;font-weight:normal;color:#e8e8e8;"><span style="transform:scaleX(0.91);transform-origin:left center">Ileum 2</span></div>
<div class="t" style="left:84.5px;top:542.3px;width:175.60000000000002px;height:20.4px;line-height:20.4px;justify-content:flex-end;font-size:11px;font-weight:normal;color:#ececec;"><span style="transform:scaleX(0.91);transform-origin:right center">9.164e-04</span></div>
<div class="t" style="left:262.6px;top:542.3px;width:166.5px;height:20.4px;line-height:20.4px;justify-content:flex-end;font-size:11px;font-weight:normal;color:#ececec;"><span style="transform:scaleX(0.91);transform-origin:right center">8.333e-06</span></div>
<div class="r" style="left:4.5px;top:562px;width:427.1px;height:1px;background:#2e2e2e;"></div>
<div class="r" style="left:4.5px;top:563.4px;width:80.0px;height:21.4px;background:#181818;"></div>
<div class="r" style="left:84.5px;top:563.4px;width:347.1px;height:21.4px;background:#3b3b3b;"></div>
<div class="t" style="left:7px;top:563.6999999999999px;width:80px;height:20.4px;line-height:20.4px;justify-content:flex-start;font-size:11px;font-weight:normal;color:#e8e8e8;"><span style="transform:scaleX(0.91);transform-origin:left center">Ileum 3</span></div>
<div class="t" style="left:84.5px;top:563.6999999999999px;width:175.60000000000002px;height:20.4px;line-height:20.4px;justify-content:flex-end;font-size:11px;font-weight:normal;color:#ececec;"><span style="transform:scaleX(0.91);transform-origin:right center">9.153e-04</span></div>
<div class="t" style="left:262.6px;top:563.6999999999999px;width:166.5px;height:20.4px;line-height:20.4px;justify-content:flex-end;font-size:11px;font-weight:normal;color:#ececec;"><span style="transform:scaleX(0.91);transform-origin:right center">8.333e-06</span></div>
<div class="r" style="left:4.5px;top:584px;width:427.1px;height:1px;background:#2e2e2e;"></div>
<div class="r" style="left:4.5px;top:584.8px;width:80.0px;height:21.4px;background:#181818;"></div>
<div class="r" style="left:84.5px;top:584.8px;width:347.1px;height:21.4px;background:#3b3b3b;"></div>
<div class="t" style="left:7px;top:585.0999999999999px;width:80px;height:20.4px;line-height:20.4px;justify-content:flex-start;font-size:11px;font-weight:normal;color:#e8e8e8;"><span style="transform:scaleX(0.91);transform-origin:left center">Caecum</span></div>
<div class="t" style="left:84.5px;top:585.0999999999999px;width:175.60000000000002px;height:20.4px;line-height:20.4px;justify-content:flex-end;font-size:11px;font-weight:normal;color:#ececec;"><span style="transform:scaleX(0.91);transform-origin:right center">2.799e-04</span></div>
<div class="t" style="left:262.6px;top:585.0999999999999px;width:166.5px;height:20.4px;line-height:20.4px;justify-content:flex-end;font-size:11px;font-weight:normal;color:#ececec;"><span style="transform:scaleX(0.91);transform-origin:right center">8.333e-06</span></div>
<div class="r" style="left:4.5px;top:605px;width:427.1px;height:1px;background:#2e2e2e;"></div>
<div class="r" style="left:4.5px;top:606.2px;width:80.0px;height:21.4px;background:#181818;"></div>
<div class="r" style="left:84.5px;top:606.2px;width:347.1px;height:21.4px;background:#3b3b3b;"></div>
<div class="t" style="left:7px;top:606.5px;width:80px;height:20.4px;line-height:20.4px;justify-content:flex-start;font-size:11px;font-weight:normal;color:#e8e8e8;"><span style="transform:scaleX(0.91);transform-origin:left center">Ascending Colon</span></div>
<div class="t" style="left:84.5px;top:606.5px;width:175.60000000000002px;height:20.4px;line-height:20.4px;justify-content:flex-end;font-size:11px;font-weight:normal;color:#ececec;"><span style="transform:scaleX(0.91);transform-origin:right center">2.767e-04</span></div>
<div class="t" style="left:262.6px;top:606.5px;width:166.5px;height:20.4px;line-height:20.4px;justify-content:flex-end;font-size:11px;font-weight:normal;color:#ececec;"><span style="transform:scaleX(0.91);transform-origin:right center">8.333e-06</span></div>
<div class="r" style="left:4.5px;top:626px;width:427.1px;height:1px;background:#2e2e2e;"></div>
<div class="r" style="left:83.7px;top:435px;width:1.6px;height:192.6px;background:#2f2f2f;opacity:.85"></div>
<div class="r" style="left:261.8px;top:435px;width:1.6px;height:192.6px;background:#2f2f2f;opacity:.85"></div>
<div class="r" style="left:1300.2px;top:439px;width:6.3px;height:200px;background:#5c5c5c;border-radius:3px"></div>
</body></html>
